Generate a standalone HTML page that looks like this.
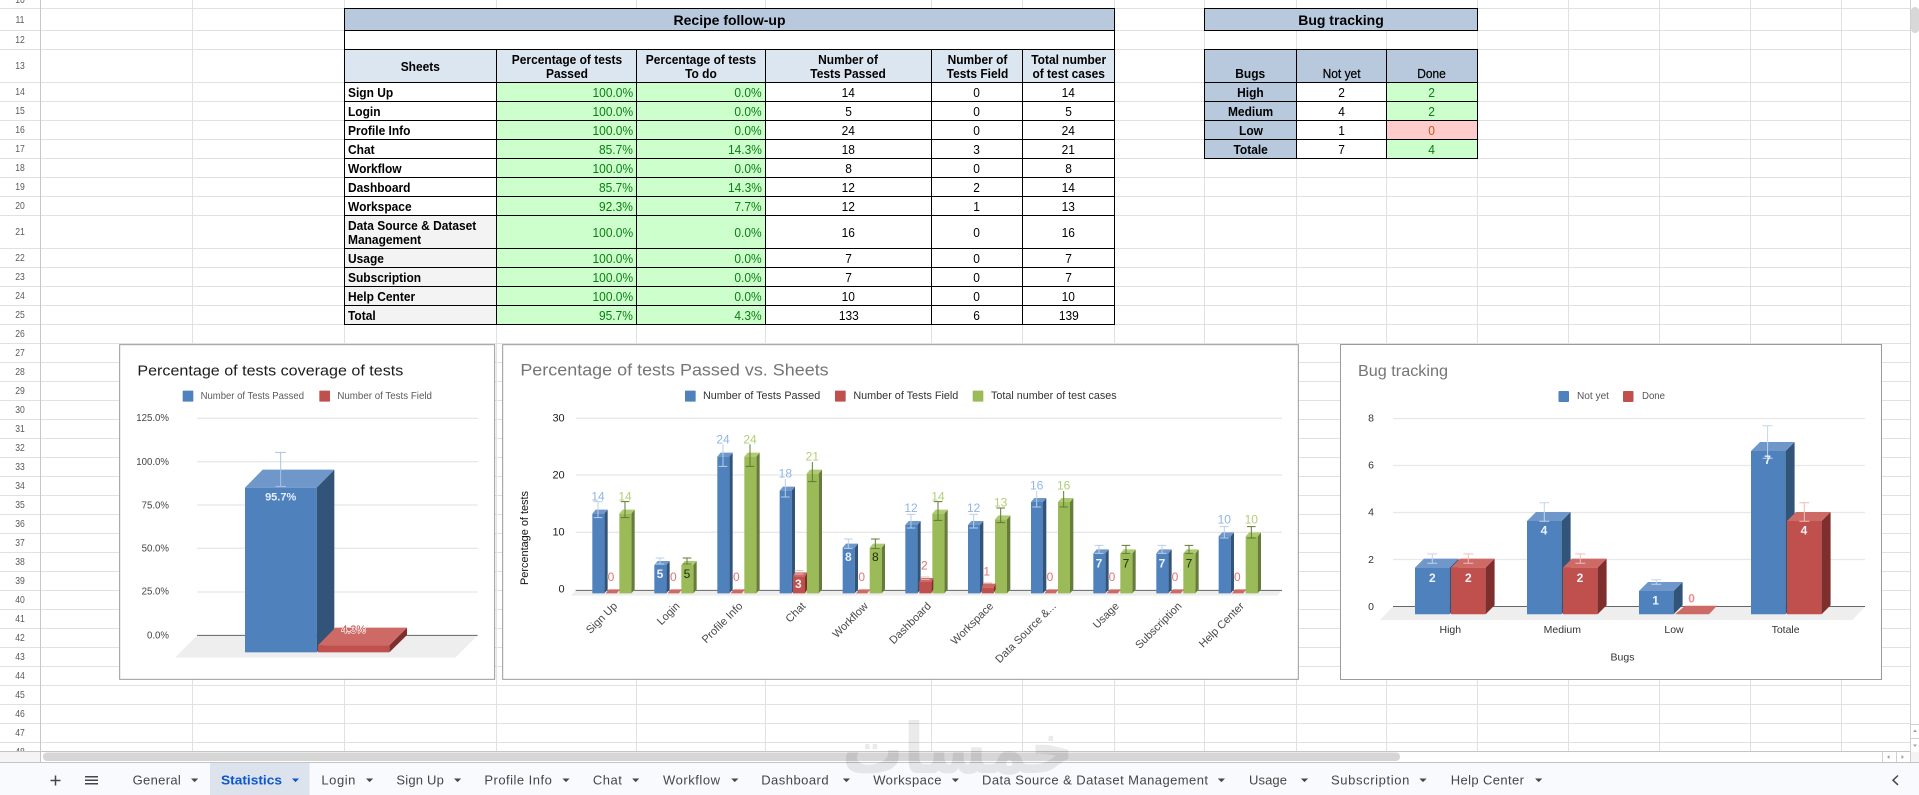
<!DOCTYPE html>
<html lang="en">
<head>
<meta charset="utf-8">
<title>Statistics</title>
<style>
html{margin:0;padding:0;background:#fff;width:1919px;height:795px;overflow:hidden}
body{margin:0;padding:0;background:#fff;width:1919px;height:795px;overflow:hidden;position:relative;font-family:"Liberation Sans",sans-serif;filter:blur(.3px)}
svg.bg{position:absolute;left:0;top:0}
svg text{font-family:"Liberation Sans",sans-serif}
table{position:absolute;border-collapse:collapse;table-layout:fixed;font:13px/14px "Liberation Sans",sans-serif;color:#000}
td{border:1px solid #000;padding:1px 3px 0;overflow:hidden;white-space:nowrap;vertical-align:middle}
td span{display:inline-block;transform:scaleX(.92)}
.c{text-align:center}.c span{transform-origin:center}
.l{text-align:left;font-weight:bold}.l span{transform-origin:left}
.r{text-align:right;color:#0a7d12;background:#ccffcc}.r span{transform-origin:right}
.h{background:#dce6f1;font-weight:bold;text-align:center;vertical-align:bottom;padding:0 3px 1px}.h span{transform-origin:center}
.hm{vertical-align:middle;padding:2px 3px 0}
.t{background:#b8c9de;font-weight:bold;text-align:center;font-size:14px;padding:0 3px}.t span{transform:none}
.g{background:#f3f3f3}
.b{background:#b8c9de;font-weight:bold;text-align:center}
.bb{vertical-align:bottom;padding:0 3px 1px}
.hn{font-weight:normal;-webkit-text-stroke:.25px #000}
.ok{background:#ccffcc;color:#0a7d12;text-align:center}
.ko{background:#ffcccc;color:#c05a1a;text-align:center}
#t2 td{text-align:center}
</style>
</head>
<body>
<svg class="bg" width="1919" height="795" viewBox="0 0 1919 795" xmlns="http://www.w3.org/2000/svg">
<rect width="1919" height="795" fill="#fff"/>
<path fill="none" stroke="#e1e1e1" stroke-width="1" d="M0 8.5H1910M0 30.5H1910M0 49.5H1910M0 82.5H1910M0 101.5H1910M0 120.5H1910M0 139.5H1910M0 158.5H1910M0 177.5H1910M0 196.5H1910M0 215.5H1910M0 248.5H1910M0 267.5H1910M0 286.5H1910M0 305.5H1910M0 324.5H1910M0 343.5H1910M0 362.5H1910M0 381.5H1910M0 400.5H1910M0 419.5H1910M0 438.5H1910M0 457.5H1910M0 476.5H1910M0 495.5H1910M0 514.5H1910M0 533.5H1910M0 552.5H1910M0 571.5H1910M0 590.5H1910M0 609.5H1910M0 628.5H1910M0 647.5H1910M0 666.5H1910M0 685.5H1910M0 704.5H1910M0 723.5H1910M0 742.5H1910M192.5 0V751M344.5 0V751M496.5 0V751M636.5 0V751M765.5 0V751M931.5 0V751M1022.5 0V751M1114.5 0V751M1204.5 0V751M1296.5 0V751M1386.5 0V751M1477.5 0V751M1568.5 0V751M1659.5 0V751M1750.5 0V751M1841.5 0V751"/>
<path fill="none" stroke="#c8c8c8" d="M40.5 0V751M1910.5 0V751"/>
<g font-size="10.5" fill="#5a5a5a" text-anchor="middle" transform="translate(3.6 0) scale(.82 1)">
<text x="20" y="3">10</text><text x="20" y="23">11</text><text x="20" y="43">12</text><text x="20" y="69">13</text><text x="20" y="95">14</text><text x="20" y="114">15</text><text x="20" y="133">16</text><text x="20" y="152">17</text><text x="20" y="171">18</text><text x="20" y="190">19</text><text x="20" y="209">20</text><text x="20" y="235">21</text><text x="20" y="261">22</text><text x="20" y="280">23</text><text x="20" y="299">24</text><text x="20" y="318">25</text><text x="20" y="337">26</text><text x="20" y="356">27</text><text x="20" y="375">28</text><text x="20" y="394">29</text><text x="20" y="413">30</text><text x="20" y="432">31</text><text x="20" y="451">32</text><text x="20" y="470">33</text><text x="20" y="489">34</text><text x="20" y="508">35</text><text x="20" y="527">36</text><text x="20" y="546">37</text><text x="20" y="565">38</text><text x="20" y="584">39</text><text x="20" y="603">40</text><text x="20" y="622">41</text><text x="20" y="641">42</text><text x="20" y="660">43</text><text x="20" y="679">44</text><text x="20" y="698">45</text><text x="20" y="717">46</text><text x="20" y="736">47</text><text x="20" y="755">48</text>
</g>

<!-- chart 1 -->
<g transform="translate(100,335) scale(.33333)">
<rect x="59" y="29" width="1125" height="1004" fill="#fff" stroke="#9a9a9a" stroke-width="3"/>
<text x="112" y="122" font-size="44" fill="#1c1c1c" textLength="798" lengthAdjust="spacingAndGlyphs">Percentage of tests coverage of tests</text>
<rect x="248" y="167" width="32" height="33" rx="2" fill="#4f81bd"/>
<text x="302" y="192" font-size="29" fill="#5a5a5a" textLength="310" lengthAdjust="spacingAndGlyphs">Number of Tests Passed</text>
<rect x="658" y="167" width="32" height="33" rx="2" fill="#c0504d"/>
<text x="712" y="192" font-size="29" fill="#5a5a5a" textLength="284" lengthAdjust="spacingAndGlyphs">Number of Tests Field</text>
<g font-size="29" fill="#444" text-anchor="end">
<text x="207" y="258">125.0%</text><text x="207" y="390">100.0%</text><text x="207" y="520">75.0%</text><text x="207" y="649">50.0%</text><text x="207" y="779">25.0%</text><text x="207" y="911">0.0%</text>
</g>
<path stroke="#e8e8e8" stroke-width="4" fill="none" d="M291 250H1133M291 380H1133M291 510H1133M291 640H1133M291 771H1133"/>
<polygon points="225,968 291,901 1133,901 1066,968" fill="#eee"/>
<path stroke="#666" stroke-width="3" d="M291 901H1133"/>
<polygon points="650,458 703,404 703,900 650,952" fill="#335479"/>
<polygon points="435,458 488,404 703,404 650,458" fill="#6f97c9"/>
<rect x="435" y="458" width="215" height="494" fill="#4f81bd"/>
<path stroke="#a9c3e4" stroke-width="3" fill="none" d="M542 352V454M526 352H558M526 454H558"/>
<text x="542" y="496" font-size="33" font-weight="bold" fill="#e6eef8" text-anchor="middle">95.7%</text>
<polygon points="868,931 921,878 921,900 868,952" fill="#7e2f2d"/>
<polygon points="654,931 706,878 921,878 868,931" fill="#cd6a66"/>
<rect x="654" y="931" width="214" height="21" fill="#c0504d"/>
<text x="761" y="894" font-size="32" fill="#c0504d" stroke="#fbeeee" stroke-width="4" paint-order="stroke" text-anchor="middle" stroke-linejoin="round">4.3%</text>
</g>

<!-- chart 2 -->
<g transform="translate(495,335) scale(.33333)">
<rect x="23" y="29" width="2387" height="1004" fill="#fff" stroke="#9a9a9a" stroke-width="3"/>
<text x="76" y="122" font-size="51" fill="#757575" textLength="925" lengthAdjust="spacingAndGlyphs">Percentage of tests Passed vs. Sheets</text>
<rect x="570" y="167" width="32" height="33" rx="2" fill="#4f81bd"/>
<text x="624" y="192" font-size="32" fill="#333" textLength="352" lengthAdjust="spacingAndGlyphs">Number of Tests Passed</text>
<rect x="1020" y="167" width="32" height="33" rx="2" fill="#c0504d"/>
<text x="1075" y="192" font-size="32" fill="#333" textLength="315" lengthAdjust="spacingAndGlyphs">Number of Tests Field</text>
<rect x="1433" y="167" width="32" height="33" rx="2" fill="#9bbb59"/>
<text x="1488" y="192" font-size="32" fill="#333" textLength="377" lengthAdjust="spacingAndGlyphs">Total number of test cases</text>
<g font-size="33" fill="#222" text-anchor="end">
<text x="209" y="259">30</text><text x="209" y="430">20</text><text x="209" y="602">10</text><text x="209" y="773">0</text>
</g>
<text transform="translate(99,750) rotate(-90)" font-size="32" fill="#111" textLength="282" lengthAdjust="spacingAndGlyphs">Percentage of tests</text>
<path stroke="#e8e8e8" stroke-width="4" fill="none" d="M242 250H2361M242 420H2361M242 592H2361"/>
<polygon points="228,782 242,766 2361,766 2347,782" fill="#eee"/>
<path stroke="#666" stroke-width="3" d="M242 766H2361"/>

<!-- blue -->
<path fill="#335479" d="M328 536l10-12V763l-10 12zM514 690l10-12V763l-10 12zM703 365l10-12V763l-10 12zM890 467l10-12V763l-10 12zM1079 638l10-12V763l-10 12zM1267 570l10-12V763l-10 12zM1455 570l10-12V763l-10 12zM1644 501l10-12V763l-10 12zM1831 655l10-12V763l-10 12zM2020 655l10-12V763l-10 12zM2207 604l10-12V763l-10 12z"/>
<path fill="#6f97c9" d="M292 536l10-12h36l-10 12zM478 690l10-12h36l-10 12zM667 365l10-12h36l-10 12zM854 467l10-12h36l-10 12zM1043 638l10-12h36l-10 12zM1231 570l10-12h36l-10 12zM1419 570l10-12h36l-10 12zM1608 501l10-12h36l-10 12zM1795 655l10-12h36l-10 12zM1984 655l10-12h36l-10 12zM2171 604l10-12h36l-10 12z"/>
<path fill="#4f81bd" d="M292 536h36V775h-36zM478 690h36V775h-36zM667 365h36V775h-36zM854 467h36V775h-36zM1043 638h36V775h-36zM1231 570h36V775h-36zM1419 570h36V775h-36zM1608 501h36V775h-36zM1795 655h36V775h-36zM1984 655h36V775h-36zM2171 604h36V775h-36z"/>
<!-- green -->
<path fill="#667c3a" d="M409 536l10-12V763l-10 12zM595 690l10-12V763l-10 12zM784 365l10-12V763l-10 12zM971 416l10-12V763l-10 12zM1160 638l10-12V763l-10 12zM1348 536l10-12V763l-10 12zM1536 553l10-12V763l-10 12zM1725 501l10-12V763l-10 12zM1912 655l10-12V763l-10 12zM2101 655l10-12V763l-10 12zM2288 604l10-12V763l-10 12z"/>
<path fill="#aecb73" d="M373 536l10-12h36l-10 12zM559 690l10-12h36l-10 12zM748 365l10-12h36l-10 12zM935 416l10-12h36l-10 12zM1124 638l10-12h36l-10 12zM1312 536l10-12h36l-10 12zM1500 553l10-12h36l-10 12zM1689 501l10-12h36l-10 12zM1876 655l10-12h36l-10 12zM2065 655l10-12h36l-10 12zM2252 604l10-12h36l-10 12z"/>
<path fill="#9bbb59" d="M373 536h36V775h-36zM559 690h36V775h-36zM748 365h36V775h-36zM935 416h36V775h-36zM1124 638h36V775h-36zM1312 536h36V775h-36zM1500 553h36V775h-36zM1689 501h36V775h-36zM1876 655h36V775h-36zM2065 655h36V775h-36zM2252 604h36V775h-36z"/>
<!-- red -->
<path fill="#7e2f2d" d="M930 724l6-12V763l-6 12zM1309 741l6-12V763l-6 12zM1496 758l6-12V763l-6 12z"/>
<path fill="#cd6a66" d="M894 724l6-12h36l-6 12zM1273 741l6-12h36l-6 12zM1460 758l6-12h36l-6 12zM332 775l10-12h32l-8 12zM518 775l10-12h32l-8 12zM707 775l10-12h32l-8 12zM1083 775l10-12h32l-8 12zM1648 775l10-12h32l-8 12zM1835 775l10-12h32l-8 12zM2024 775l10-12h32l-8 12zM2211 775l10-12h32l-8 12z"/>
<path fill="#c0504d" d="M894 724h36V775h-36zM1273 741h36V775h-36zM1460 758h36V775h-36z"/>
<!-- error bars -->
<path fill="none" stroke="#b9cfe9" stroke-width="3" d="M309 500V548M296 500h26M296 548h26M495 669V687M482 669h26M482 687h26M684 328V394M671 394h26M871 432V486M858 486h26M1060 612V640M1047 612h26M1047 640h26M1248 538V579M1235 538h26M1235 579h26M1436 538V579M1423 538h26M1423 579h26M1625 468V516M1612 516h26M1812 631V655M1799 631h26M1799 655h26M2001 631V655M1988 631h26M1988 655h26M2188 575V609M2175 575h26M2175 609h26"/>
<path fill="none" stroke="#5f7a30" stroke-width="3" d="M390 500V548M377 500h26M377 548h26M576 669V687M563 669h26M563 687h26M765 328V394M752 394h26M952 381V440M939 440h26M1141 612V640M1128 612h26M1128 640h26M1329 500V556M1316 500h26M1316 556h26M1517 519V563M1504 519h26M1504 563h26M1706 468V516M1693 516h26M1893 631V655M1880 631h26M1880 655h26M2082 631V655M2069 631h26M2069 655h26M2269 575V609M2256 575h26M2256 609h26"/>
<path fill="none" stroke="#f0b8b6" stroke-width="3" d="M899 707h26M899 717h26M1278 726h26M1278 733h26M1465 744h26"/>
<!-- labels -->
<g font-size="36" fill="#8fb5e6" text-anchor="middle">
<text x="309" y="497">14</text><text x="684" y="326">24</text><text x="871" y="428">18</text><text x="1248" y="531">12</text><text x="1436" y="531">12</text><text x="1625" y="463">16</text><text x="2188" y="566">10</text>
</g>
<g font-size="36" fill="#b2ce78" text-anchor="middle">
<text x="390" y="497">14</text><text x="765" y="326">24</text><text x="952" y="377">21</text><text x="1329" y="497">14</text><text x="1517" y="515">13</text><text x="1706" y="463">16</text><text x="2269" y="566">10</text>
</g>
<g font-size="36" font-weight="bold" fill="#eaf1fa" text-anchor="middle">
<text x="495" y="729">5</text><text x="1060" y="678">8</text><text x="1812" y="697">7</text><text x="2001" y="697">7</text>
</g>
<g font-size="36" fill="#1e2a0e" text-anchor="middle">
<text x="576" y="729">5</text><text x="1141" y="678">8</text><text x="1893" y="697">7</text><text x="2082" y="697">7</text>
</g>
<g font-size="36" fill="#e27371" stroke="#fff" stroke-width="3" paint-order="stroke" text-anchor="middle">
<text x="348" y="738">0</text><text x="535" y="738">0</text><text x="724" y="738">0</text><text x="1100" y="738">0</text><text x="1665" y="738">0</text><text x="1851" y="738">0</text><text x="2040" y="738">0</text><text x="2227" y="738">0</text><text x="1288" y="703">2</text><text x="1475" y="721">1</text>
</g>
<text x="910" y="759" font-size="36" font-weight="bold" fill="#fbeeee" text-anchor="middle">3</text>
<!-- x labels -->
<g font-size="33" fill="#484848" text-anchor="end">
<text transform="translate(369,815) rotate(-45)">Sign Up</text>
<text transform="translate(556,815) rotate(-45)">Login</text>
<text transform="translate(745,815) rotate(-45)">Profile Info</text>
<text transform="translate(934,815) rotate(-45)">Chat</text>
<text transform="translate(1121,815) rotate(-45)">Workflow</text>
<text transform="translate(1310,815) rotate(-45)">Dashboard</text>
<text transform="translate(1497,815) rotate(-45)">Workspace</text>
<text transform="translate(1685,815) rotate(-45)">Data Source &amp;...</text>
<text transform="translate(1874,815) rotate(-45)">Usage</text>
<text transform="translate(2062,815) rotate(-45)">Subscription</text>
<text transform="translate(2249,815) rotate(-45)">Help Center</text>
</g>
</g>

<!-- chart 3 -->
<rect x="1340.5" y="344.5" width="541" height="335" fill="#fff" stroke="#9a9a9a"/>
<text x="1358" y="376" font-size="16" fill="#757575" textLength="90" lengthAdjust="spacingAndGlyphs">Bug tracking</text>
<rect x="1558.5" y="391" width="10.5" height="11" rx="1" fill="#4f81bd"/>
<text x="1577" y="399" font-size="10" fill="#555" textLength="32" lengthAdjust="spacingAndGlyphs">Not yet</text>
<rect x="1623" y="391" width="10.5" height="11" rx="1" fill="#c0504d"/>
<text x="1642" y="399" font-size="10" fill="#555" textLength="23" lengthAdjust="spacingAndGlyphs">Done</text>
<g font-size="10.5" fill="#333" text-anchor="end">
<text x="1374" y="421.5">8</text><text x="1374" y="468.5">6</text><text x="1374" y="515.5">4</text><text x="1374" y="563">2</text><text x="1374" y="610">0</text>
</g>
<path stroke="#e8e8e8" stroke-width="1.3" fill="none" d="M1393 418.5H1865M1393 465.5H1865M1393 512.5H1865M1393 559.5H1865"/>
<polygon points="1380,620 1393.2,606.3 1865.3,606.3 1852.6,620" fill="#eee"/>
<path stroke="#666" d="M1393 606.5H1865"/>
<path fill="#335479" d="M1449.6 567.6l9-9V605.3l-9 9zM1561.6 521l9-9V605.3l-9 9zM1673.6 591l9-9V605.3l-9 9zM1785.6 451l9-9V605.3l-9 9z"/>
<path fill="#6f97c9" d="M1415 567.6l9-9h34.6l-9 9zM1527 521l9-9h34.6l-9 9zM1639 591l9-9h34.6l-9 9zM1751 451l9-9h34.6l-9 9z"/>
<path fill="#4f81bd" d="M1415 567.6h34.6V614.3h-34.6zM1527 521h34.6V614.3h-34.6zM1639 591h34.6V614.3h-34.6zM1751 451h34.6V614.3h-34.6z"/>
<path fill="#7e2f2d" d="M1485.6 567.6l9-9V605.3l-9 9zM1597.6 567.6l9-9V605.3l-9 9zM1821.6 521l9-9V605.3l-9 9z"/>
<path fill="#cd6a66" d="M1451 567.6l9-9h34.6l-9 9zM1563 567.6l9-9h34.6l-9 9zM1787 521l9-9h34.6l-9 9zM1675 614.3l10.3-8.6h31.7l-8 8.6z"/>
<path fill="#c0504d" d="M1451 567.6h34.6V614.3h-34.6zM1563 567.6h34.6V614.3h-34.6zM1787 521h34.6V614.3h-34.6z"/>
<path fill="none" stroke="#c3d5ea" d="M1432.3 554V563.3M1427.3 554h10M1427.3 563.3h10M1544.3 502.7V521.3M1539.3 502.7h10M1539.3 521.3h10M1656.3 579.7V584.3M1651.3 579.7h10M1651.3 584.3h10M1767.6 425.7V458.3M1762.6 425.7h10M1762.6 458.3h10"/>
<path fill="none" stroke="#eebcba" d="M1468.3 554V563.3M1463.3 554h10M1463.3 563.3h10M1580.3 554V563.3M1575.3 554h10M1575.3 563.3h10M1804.3 502.7V521.3M1799.3 502.7h10M1799.3 521.3h10"/>
<g font-size="12" font-weight="bold" fill="#eef3fa" text-anchor="middle">
<text x="1432.3" y="582">2</text><text x="1468.3" y="582">2</text><text x="1544" y="534.5">4</text><text x="1580" y="582">2</text><text x="1655.6" y="604.5">1</text><text x="1767.6" y="464">7</text><text x="1804" y="534.5">4</text>
</g>
<text x="1691.6" y="602.7" font-size="12" font-weight="bold" fill="#e9908d" text-anchor="middle">0</text>
<g font-size="10.5" fill="#333" text-anchor="middle">
<text x="1450.3" y="633">High</text><text x="1562.3" y="633">Medium</text><text x="1674" y="633">Low</text><text x="1785.6" y="633">Totale</text><text x="1622.5" y="660.5">Bugs</text>
</g>

<!-- scrollbars -->
<rect x="0" y="751" width="1919" height="44" fill="#fff"/>
<rect x="0" y="752" width="40" height="10" fill="#f4f4f4"/>
<path stroke="#c4c4c4" fill="none" d="M0 751.5H1910M0 762.5H1919M40.5 752V762"/>
<rect x="43" y="752.5" width="1357" height="8.5" rx="4" fill="#d6d6d6"/>
<rect x="1911" y="7" width="8" height="26" rx="4" fill="#d8d8d8"/>
<path fill="none" stroke="#d0d0d0" d="M1910.5 724.5H1919M1910.5 738.5H1919M1882.5 752V762M1896.5 752V762M1910.5 0V762"/>
<path fill="#a0a0a0" d="M1915 729.5l-2 2.5h4zM1915 747l-2-2.5h4zM1887 757l2.5-2v4zM1904 757l-2.5-2v4z"/>
<rect x="1911" y="752" width="8" height="10" fill="#f4f4f4"/>

<!-- tab bar -->
<rect x="0" y="763" width="1919" height="32" fill="#f8fafd"/>
<rect x="210" y="763" width="99.5" height="32" fill="#dde3ec"/>
<path stroke="#444746" stroke-width="1.5" fill="none" d="M50.5 780.5h10M55.5 775.5v10M85 776.7h13M85 780.2h13M85 783.7h13M1898 775.5l-5 4.7 5 4.7"/>
<g font-size="13" fill="#444746">
<text x="132.6" y="784.5" textLength="48.2" lengthAdjust="spacing">General</text>
<text x="221" y="784.5" textLength="61" lengthAdjust="spacingAndGlyphs" fill="#0b57d0" font-weight="bold">Statistics</text>
<text x="321.4" y="784.5" textLength="34" lengthAdjust="spacing">Login</text>
<text x="396.4" y="784.5" textLength="47.4" lengthAdjust="spacing">Sign Up</text>
<text x="484.4" y="784.5" textLength="67.4" lengthAdjust="spacing">Profile Info</text>
<text x="592.9" y="784.5" textLength="29" lengthAdjust="spacing">Chat</text>
<text x="663" y="784.5" textLength="57" lengthAdjust="spacing">Workflow</text>
<text x="761.2" y="784.5" textLength="67.4" lengthAdjust="spacing">Dashboard</text>
<text x="873.2" y="784.5" textLength="68.3" lengthAdjust="spacing">Workspace</text>
<text x="982" y="784.5" textLength="226" lengthAdjust="spacing">Data Source &amp; Dataset Management</text>
<text x="1249" y="784.5" textLength="38" lengthAdjust="spacing">Usage</text>
<text x="1331" y="784.5" textLength="78.3" lengthAdjust="spacing">Subscription</text>
<text x="1450.7" y="784.5" textLength="73.3" lengthAdjust="spacing">Help Center</text>
</g>
<path fill="#444746" d="M191 778.5h7.2l-3.6 3.6zM366 778.5h7.2l-3.6 3.6zM454 778.5h7.2l-3.6 3.6zM562.4 778.5h7.2l-3.6 3.6zM632.1 778.5h7.2l-3.6 3.6zM731.2 778.5h7.2l-3.6 3.6zM842.8 778.5h7.2l-3.6 3.6zM951.8 778.5h7.2l-3.6 3.6zM1217.8 778.5h7.2l-3.6 3.6zM1300.9 778.5h7.2l-3.6 3.6zM1419.4 778.5h7.2l-3.6 3.6zM1535.1 778.5h7.2l-3.6 3.6z"/>
<path fill="#0b57d0" d="M291.9 778.5h7.2l-3.6 3.6z"/>

<!-- watermark -->
<text x="958" y="773" font-size="70" font-weight="bold" fill="#000" opacity=".08" text-anchor="middle" textLength="232" lengthAdjust="spacingAndGlyphs" style="font-family:'DejaVu Sans',sans-serif">خمسات</text>
</svg>

<table style="left:344px;top:8px;width:770px">
<colgroup><col style="width:152px"><col style="width:140px"><col style="width:129px"><col style="width:166px"><col style="width:91px"><col style="width:92px"></colgroup>
<tr style="height:22px"><td colspan="6" class="t"><span>Recipe follow-up</span></td></tr>
<tr style="height:19px"><td colspan="6" style="background:#fff"></td></tr>
<tr style="height:33px"><td class="h hm"><span>Sheets</span></td><td class="h"><span>Percentage of tests<br>Passed</span></td><td class="h"><span>Percentage of tests<br>To do</span></td><td class="h"><span>Number of<br>Tests Passed</span></td><td class="h"><span>Number of<br>Tests Field</span></td><td class="h"><span>Total number<br>of test cases</span></td></tr>
<tr style="height:19px;background:#fff"><td class="l"><span>Sign Up</span></td><td class="r"><span>100.0%</span></td><td class="r"><span>0.0%</span></td><td class="c"><span>14</span></td><td class="c"><span>0</span></td><td class="c"><span>14</span></td></tr>
<tr style="height:19px;background:#fff"><td class="l"><span>Login</span></td><td class="r"><span>100.0%</span></td><td class="r"><span>0.0%</span></td><td class="c"><span>5</span></td><td class="c"><span>0</span></td><td class="c"><span>5</span></td></tr>
<tr style="height:19px;background:#fff"><td class="l"><span>Profile Info</span></td><td class="r"><span>100.0%</span></td><td class="r"><span>0.0%</span></td><td class="c"><span>24</span></td><td class="c"><span>0</span></td><td class="c"><span>24</span></td></tr>
<tr style="height:19px;background:#fff"><td class="l"><span>Chat</span></td><td class="r"><span>85.7%</span></td><td class="r"><span>14.3%</span></td><td class="c"><span>18</span></td><td class="c"><span>3</span></td><td class="c"><span>21</span></td></tr>
<tr style="height:19px;background:#fff"><td class="l"><span>Workflow</span></td><td class="r"><span>100.0%</span></td><td class="r"><span>0.0%</span></td><td class="c"><span>8</span></td><td class="c"><span>0</span></td><td class="c"><span>8</span></td></tr>
<tr style="height:19px;background:#fff"><td class="l"><span>Dashboard</span></td><td class="r"><span>85.7%</span></td><td class="r"><span>14.3%</span></td><td class="c"><span>12</span></td><td class="c"><span>2</span></td><td class="c"><span>14</span></td></tr>
<tr style="height:19px;background:#fff"><td class="l"><span>Workspace</span></td><td class="r"><span>92.3%</span></td><td class="r"><span>7.7%</span></td><td class="c"><span>12</span></td><td class="c"><span>1</span></td><td class="c"><span>13</span></td></tr>
<tr style="height:33px;background:#fff"><td class="l g"><span>Data Source &amp; Dataset<br>Management</span></td><td class="r"><span>100.0%</span></td><td class="r"><span>0.0%</span></td><td class="c"><span>16</span></td><td class="c"><span>0</span></td><td class="c"><span>16</span></td></tr>
<tr style="height:19px;background:#fff"><td class="l g"><span>Usage</span></td><td class="r"><span>100.0%</span></td><td class="r"><span>0.0%</span></td><td class="c"><span>7</span></td><td class="c"><span>0</span></td><td class="c"><span>7</span></td></tr>
<tr style="height:19px;background:#fff"><td class="l g"><span>Subscription</span></td><td class="r"><span>100.0%</span></td><td class="r"><span>0.0%</span></td><td class="c"><span>7</span></td><td class="c"><span>0</span></td><td class="c"><span>7</span></td></tr>
<tr style="height:19px;background:#fff"><td class="l g"><span>Help Center</span></td><td class="r"><span>100.0%</span></td><td class="r"><span>0.0%</span></td><td class="c"><span>10</span></td><td class="c"><span>0</span></td><td class="c"><span>10</span></td></tr>
<tr style="height:19px;background:#fff"><td class="l g"><span>Total</span></td><td class="r"><span>95.7%</span></td><td class="r"><span>4.3%</span></td><td class="c"><span>133</span></td><td class="c"><span>6</span></td><td class="c"><span>139</span></td></tr>
</table>

<table style="left:1204px;top:8px;width:273px">
<colgroup><col style="width:92px"><col style="width:90px"><col style="width:91px"></colgroup>
<tr style="height:22px"><td colspan="3" class="t"><span>Bug tracking</span></td></tr>
</table>

<table id="t2" style="left:1204px;top:49px;width:273px">
<colgroup><col style="width:92px"><col style="width:90px"><col style="width:91px"></colgroup>
<tr style="height:33px"><td class="b bb"><span>Bugs</span></td><td class="b bb hn"><span>Not yet</span></td><td class="b bb hn"><span>Done</span></td></tr>
<tr style="height:19px;background:#fff"><td class="b"><span>High</span></td><td><span>2</span></td><td class="ok"><span>2</span></td></tr>
<tr style="height:19px;background:#fff"><td class="b"><span>Medium</span></td><td><span>4</span></td><td class="ok"><span>2</span></td></tr>
<tr style="height:19px;background:#fff"><td class="b"><span>Low</span></td><td><span>1</span></td><td class="ko"><span>0</span></td></tr>
<tr style="height:19px;background:#fff"><td class="b"><span>Totale</span></td><td><span>7</span></td><td class="ok"><span>4</span></td></tr>
</table>
</body>
</html>
